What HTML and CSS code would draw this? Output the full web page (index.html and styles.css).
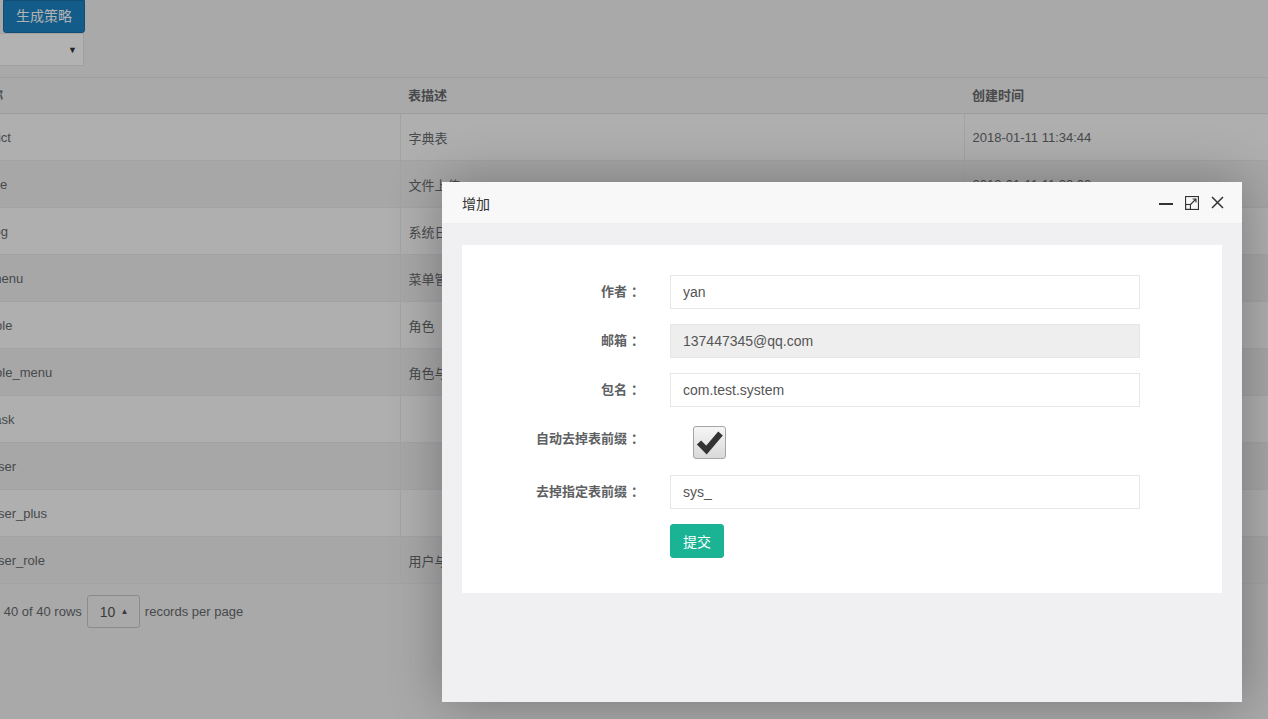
FILE: index.html
```html
<!DOCTYPE html>
<html lang="zh-CN">
<head>
<meta charset="utf-8">
<title>代码生成</title>
<link rel="stylesheet" href="styles.css">
</head>
<body>
<div class="page">
  <div class="toolbar">
    <button class="btn-strategy">生成策略</button>
    <div class="select"><span class="caret-down">▼</span></div>
  </div>
  <table class="grid">
    <colgroup><col class="c1"><col class="c2"><col class="c3"></colgroup>
    <thead>
      <tr><th>表名称</th><th>表描述</th><th>创建时间</th></tr>
    </thead>
    <tbody>
      <tr><td>sys_dict</td><td>字典表</td><td>2018-01-11 11:34:44</td></tr>
      <tr><td>sys_file</td><td>文件上传</td><td>2018-01-11 11:33:03</td></tr>
      <tr><td>sys_log</td><td>系统日志</td><td>2018-01-11 11:31:57</td></tr>
      <tr><td>sys_menu</td><td>菜单管理</td><td>2018-01-11 11:30:12</td></tr>
      <tr><td>sys_role</td><td>角色</td><td>2018-01-11 11:29:40</td></tr>
      <tr><td>sys_role_menu</td><td>角色与菜单对应关系</td><td>2018-01-11 11:28:05</td></tr>
      <tr><td>sys_task</td><td></td><td>2018-01-11 11:27:18</td></tr>
      <tr><td>sys_user</td><td></td><td>2018-01-11 11:26:44</td></tr>
      <tr><td>sys_user_plus</td><td></td><td>2018-01-11 11:25:31</td></tr>
      <tr><td>sys_user_role</td><td>用户与角色对应关系</td><td>2018-01-11 11:24:09</td></tr>
    </tbody>
  </table>
  <div class="pager">
    <span class="info">Showing 1 to 40 of 40 rows</span>
    <span class="page-size">10 <span class="caret-up">▲</span></span>
    <span class="info">records per page</span>
  </div>
</div>

<div class="shade"></div>

<div class="dialog">
  <div class="dialog-title">
    <span class="title-text">增加</span>
    <div class="tools">
      <svg width="14" height="14" viewBox="0 0 14 14"><path d="M0 8h14" stroke="#333" stroke-width="2"/></svg>
      <svg width="14" height="14" viewBox="0 0 14 14" fill="none" stroke="#333" stroke-width="1.1">
        <rect x="0.55" y="0.55" width="12.9" height="12.9"/>
        <rect x="0.55" y="8.5" width="4.9" height="4.9"/>
        <path d="M5.5 8.5L11 3M7.6 3H11V6.4"/>
      </svg>
      <svg width="13" height="13" viewBox="0 0 13 13" fill="none" stroke="#333" stroke-width="1.5"><path d="M1 1L12 12M12 1L1 12"/></svg>
    </div>
  </div>
  <div class="dialog-body">
    <div class="panel">
      <form class="form">
        <label class="lbl">作者<span class="colon">：</span></label>
        <input class="field" type="text" value="yan">
        <label class="lbl">邮箱<span class="colon">：</span></label>
        <input class="field field-disabled" type="text" value="137447345@qq.com" readonly>
        <label class="lbl">包名<span class="colon">：</span></label>
        <input class="field" type="text" value="com.test.system">
        <label class="lbl">自动去掉表前缀<span class="colon">：</span></label>
        <div class="check-cell">
          <span class="checkbox">
            <svg width="31" height="31" viewBox="0 0 31 31"><path d="M5 15.5L12.5 23L26.5 6.5" fill="none" stroke="#333" stroke-width="6"/></svg>
          </span>
        </div>
        <label class="lbl">去掉指定表前缀<span class="colon">：</span></label>
        <input class="field" type="text" value="sys_">
        <div></div>
        <div><button class="btn-submit" type="button">提交</button></div>
      </form>
    </div>
  </div>
</div>
</body>
</html>
```
FILE: styles.css
```css
* { box-sizing: border-box; }
html, body { margin: 0; }
body {
  width: 1268px;
  height: 719px;
  overflow: hidden;
  position: relative;
  font-family: "Liberation Sans", "Noto Sans CJK SC", sans-serif;
  font-size: 13px;
  color: #676a6c;
  background: #f3f3f4;
}
.page {
  margin-left: -44px;
  width: 1312px;
}
.toolbar {
  display: flex;
  flex-direction: column;
  align-items: flex-start;
}
.btn-strategy {
  margin-left: 47px;
  height: 33px;
  padding: 0 12px;
  font-family: inherit;
  font-size: 14px;
  line-height: 31px;
  color: #fff;
  background: #1c84c6;
  border: 1px solid #1a6fa8;
  border-radius: 0 0 3px 3px;
}
.select {
  width: 128px;
  height: 33px;
  background: #fff;
  border: 1px solid #e5e6e7;
  display: flex;
  align-items: center;
  justify-content: flex-end;
  padding-right: 6px;
}
.caret-down {
  font-size: 9px;
  color: #333;
}
.grid {
  width: 100%;
  margin-top: 11px;
  border-collapse: collapse;
  table-layout: fixed;
  border-top: 1px solid #e2e4e6;
}
.c1 { width: 444px; }
.c2 { width: 564px; }
.grid th {
  height: 36px;
  padding: 0 8px 2px;
  text-align: left;
  font-weight: bold;
  border-bottom: 1px solid #dfe2e4;
}
.grid td {
  height: 47px;
  padding: 0 8px;
  border-bottom: 1px solid #e7eaec;
  white-space: nowrap;
  overflow: hidden;
}
.grid td + td { border-left: 1px solid #e7eaec; }
.grid tbody tr:nth-child(odd) td { background: #fbfbfb; }
.grid tbody tr:nth-child(even) td { background: #efeff1; }
.pager {
  display: flex;
  align-items: center;
  gap: 5px;
  margin-top: 11px;
  margin-left: -31px;
}
.info { white-space: nowrap; }
.page-size {
  height: 33px;
  width: 53px;
  padding: 0 12px;
  display: flex;
  align-items: center;
  gap: 5px;
  font-size: 14px;
  color: #555;
  border: 1px solid #c7c7c9;
  border-radius: 3px;
}
.caret-up { font-size: 8px; color: #555; }

.shade {
  position: absolute;
  inset: 0;
  background: rgba(0, 0, 0, 0.3);
}

.dialog {
  position: absolute;
  left: 442px;
  top: 182px;
  width: 800px;
  height: 520px;
  display: flex;
  flex-direction: column;
  background: #f0f0f2;
  box-shadow: 1px 1px 50px rgba(0, 0, 0, 0.3);
}
.dialog-title {
  flex: none;
  height: 42px;
  display: flex;
  align-items: center;
  padding: 0 18px 0 20px;
  background: #f8f8f8;
  border-bottom: 1px solid #eee;
  color: #333;
  font-size: 14px;
}
.tools {
  margin-left: auto;
  display: flex;
  align-items: center;
  gap: 12px;
}
.tools svg { display: block; }
.dialog-body {
  flex: 1;
  padding: 21px 20px 20px;
  background: #f0f0f2;
}
.panel {
  background: #fff;
  padding: 30px 0 35px;
}
.form {
  margin: 0;
  display: grid;
  grid-template-columns: 178px 470px;
  column-gap: 30px;
  row-gap: 15px;
}
.lbl {
  text-align: right;
  font-weight: bold;
  padding-top: 7px;
  line-height: 20px;
  white-space: nowrap;
  color: #5e6163;
}
.colon {
  display: inline-block;
  margin-left: 4px;
  margin-right: -4px;
}
.field {
  height: 34px;
  width: 470px;
  padding: 6px 12px;
  border: 1px solid #e5e6e7;
  font-family: "Liberation Sans", "Noto Sans CJK SC", sans-serif;
  font-size: 14px;
  color: #555;
  background: #fff;
  outline: none;
}
.field-disabled { background: #eee; }
.check-cell {
  height: 38px;
  padding: 4px 0 0 23px;
}
.checkbox {
  display: flex;
  align-items: center;
  justify-content: center;
  width: 33px;
  height: 33px;
  border: 1px solid #a5a5a5;
  border-radius: 3px;
  background: linear-gradient(#f6f6f6, #d9d9d9);
}
.checkbox svg { display: block; }
.btn-submit {
  width: 54px;
  height: 34px;
  padding: 0;
  font-family: inherit;
  font-size: 14px;
  color: #fff;
  background: #1ab394;
  border: 1px solid #1ab394;
  border-radius: 3px;
}
```
